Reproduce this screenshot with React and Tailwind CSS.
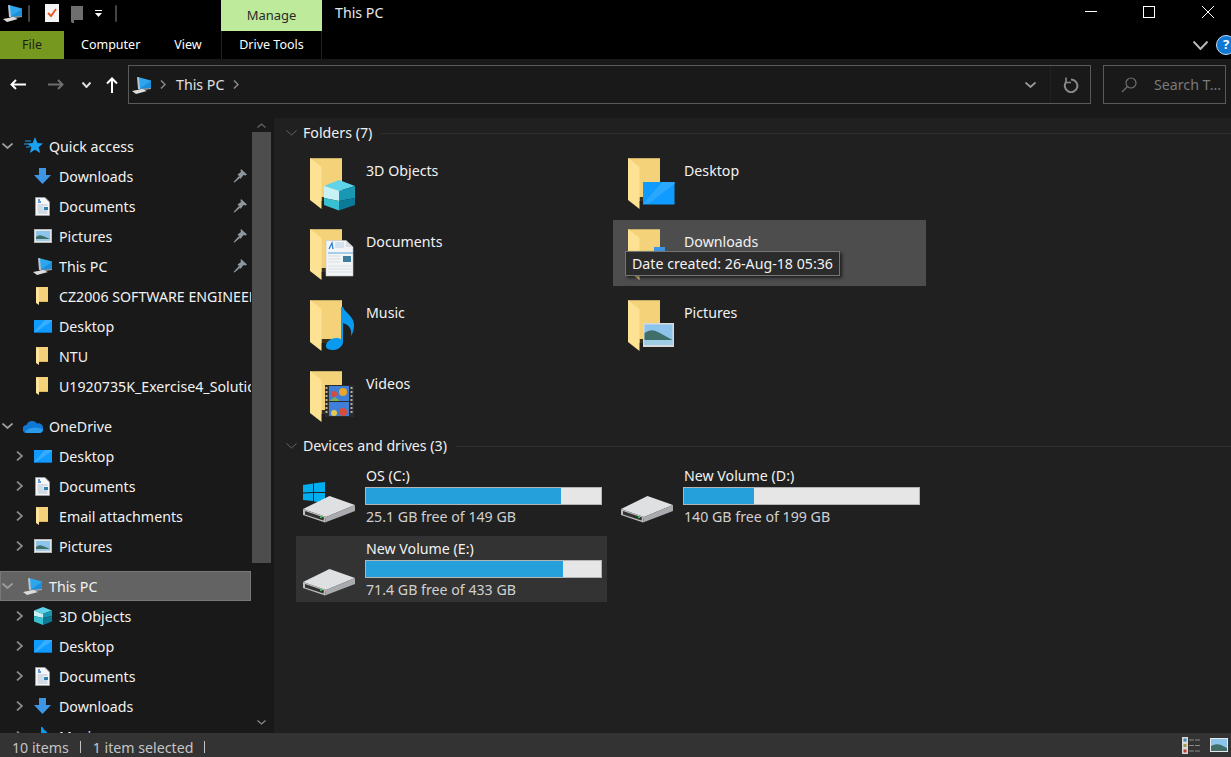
/* small icons, 20x20 box */
const PcIcon = () => (
  <svg width="20" height="18" viewBox="0 0 20 18">
    <polygon points="6,1 19,4.500 19,12 7,13" fill="#2ea6ee" />
    <polygon points="7,13 19,5 19,12" fill="#1b8fdc" />
    <polygon points="5,1 7,1.500 8,13 6,13" fill="#b9c6d0" />
    <polygon points="7,13 19,12 19,13 8,14.500" fill="#a8a8a8" />
    <polygon points="0,15 10,13 15,15 4,18" fill="#dcdcdc" />
  </svg>
);

const StarIcon = () => (
  <svg width="20" height="18" viewBox="0 0 20 18">
    <polygon points="12,0 14.400,6 20,6.400 15.600,10.200 17.200,16 12,12.800 6.800,16 8.400,10.200 4,6.400 9.600,6" fill="#1ba1f2" />
    <path d="M2 4h6M1 7h4M3 10h4" stroke="#1ba1f2" strokeWidth="1" />
  </svg>
);

const DownloadIcon = () => (
  <svg width="18" height="17" viewBox="0 0 18 17">
    <polygon points="5,0 12,0 12,7 17,7 8.500,16 0,7 5,7" fill="#3d95e6" />
  </svg>
);

const DocIcon = () => (
  <svg width="15" height="19" viewBox="0 0 15 19">
    <polygon points="0.500,0.500 10,0.500 14.500,5 14.500,18.500 0.500,18.500" fill="#f7f7f7" stroke="#9a9a9a" />
    <path d="M3 3h2M3 5h3" stroke="#2d7fd0" strokeWidth="1.400" />
    <path d="M2.500 8h10M2.500 10h6M2.500 12h6M2.500 14h10M2.500 16h10" stroke="#9cb3c6" strokeWidth="0.800" />
    <rect x="9" y="10" width="4" height="3" fill="#2d7fb0" />
  </svg>
);

const PicIcon = () => (
  <svg width="18" height="14" viewBox="0 0 18 14">
    <rect x="0.500" y="0.500" width="17" height="13" fill="#e4e6e8" stroke="#b8b8b8" />
    <rect x="2" y="2" width="14" height="10" fill="#8cc4ec" />
    <path d="M2 8 Q5 5 9 7 L16 10 H2Z" fill="#3f6f68" />
    <rect x="2" y="10" width="14" height="2" fill="#9ccde4" />
  </svg>
);

const SmallFolder = () => (
  <svg width="13" height="18" viewBox="0 0 13 18">
    <polygon points="0,0 12,0 12,15 3,15" fill="#f3d27a" />
    <polygon points="0,0 3,2 3,18 0,16" fill="#fde49a" />
    <rect x="3" y="14" width="9" height="1" fill="#e0b95a" />
  </svg>
);

const DesktopIcon = () => (
  <svg width="18" height="13" viewBox="0 0 18 13">
    <rect width="18" height="13" fill="#0f9bff" />
    <polygon points="0,12 11,0 18,0 18,1 2,12" fill="#37adff" />
    <rect y="12" width="18" height="1" fill="#0b6fc0" />
  </svg>
);

const CloudIcon = () => (
  <svg width="20" height="13" viewBox="0 0 20 13">
    <path d="M4 13a4 4 0 0 1-.5-8A6 6 0 0 1 14 3.500 4.800 4.800 0 0 1 20 9a4 4 0 0 1-4 4Z" fill="#0f78d4" />
    <path d="M4 13a4 4 0 0 1-2-1c2-3 8-6 18-3a4 4 0 0 1-4 4Z" fill="#2a9bea" />
  </svg>
);

const SmallCube = () => (
  <svg width="18" height="18" viewBox="0 0 18 18">
    <polygon points="9,0 18,3.500 9,7 0,3.500" fill="#5fd4e8" />
    <polygon points="0,3.500 9,7 9,11 0,9" fill="#c8f1f5" />
    <polygon points="0,9 9,11 9,18 0,14.500" fill="#38c0d0" />
    <polygon points="18,3.500 9,7 9,11 18,9" fill="#1898b4" />
    <polygon points="18,9 9,11 9,18 18,14.500" fill="#0a7a98" />
  </svg>
);

const MusicSmall = () => (
  <svg width="14" height="18" viewBox="0 0 14 18">
    <path d="M5 0h1.500c.5 3 6 4 5 9-1-2-3-3-5-3v8c0 2-2 3.500-4 3.500S0 16 1 14.500 4 13 5 13.500Z" fill="#0a9bf0" />
  </svg>
);

const Pin = () => (
  <svg width="14" height="14" viewBox="0 0 14 14">
    <polygon points="8,0 14,5.500 12.500,6.500 10.500,6 7.500,10 6.500,7.500 4.500,5.500 8,3 7.500,1.500" fill="#8e979e" />
    <polygon points="6,7 7.500,8.500 1.500,13.500 0.500,13" fill="#8e979e" />
  </svg>
);

/* chevrons at the sizes the shell draws them */
const ChevDown = ({ className, w = 11, h = 6, sw = 1.700 }) => (
  <svg width={w} height={h} viewBox={`0 0 ${w} ${h}`} className={className}>
    <path d={`M.5 .5L${w / 2} ${h - 1}L${w - 0.5} .5`} fill="none" stroke="currentColor" strokeWidth={sw} />
  </svg>
);

const ChevRight = ({ className, w = 7, h = 10, sw = 1.700 }) => (
  <svg width={w} height={h} viewBox={`0 0 ${w} ${h}`} className={className}>
    <path d={`M1 .5L${w - 1} ${h / 2}L1 ${h - 0.5}`} fill="none" stroke="currentColor" strokeWidth={sw} />
  </svg>
);

/* large folder, every overlay drawn relative to the folder's top left */
const BigFolder = ({ children }) => (
  <svg width="48" height="54" viewBox="0 0 48 54" className="shrink-0">
    <polygon points="0,0 32,0 32,43 11,43" fill="#f3d27a" />
    <rect y="0" width="32" height="1" fill="#c9ae6a" />
    <rect x="11.500" y="39" width="20.500" height="4" fill="#3b321c" />
    <polygon points="0,0 11.500,9 11.500,51 0,42" fill="#fde293" />
    {children}
  </svg>
);

const CubeOverlay = () => (
  <>
    <polygon points="29,22 45,28 29,33 14,28" fill="#5fd4e8" />
    <polygon points="14,28 29,33 29,43 14,40" fill="#c8f1f5" />
    <polygon points="14,40 29,43 29,52.500 14,47" fill="#38c0d0" />
    <polygon points="45,28 29,33 29,43 45,40" fill="#1898b4" />
    <polygon points="45,40 29,43 29,52.500 45,47" fill="#0a7a98" />
  </>
);

const DocOverlay = () => (
  <>
    <polygon points="16,11.500 36,11.500 43,18 43,47 16,47" fill="#f2f4f6" stroke="#c4c4c4" strokeWidth="0.600" />
    <polygon points="36,11.500 43,18 36,18" fill="#d8dde2" />
    <path d="M19 20l3-6 1 6" stroke="#2d7fd0" strokeWidth="1.300" fill="none" />
    <path d="M25 14h9M25 16h9M25 18h9" stroke="#a8c8e8" strokeWidth="0.800" />
    <path d="M18 24h25" stroke="#5aa6dc" strokeWidth="1" />
    <path d="M18 27h12M18 30h12M18 33h12M18 37h24M18 40h24M18 43h24" stroke="#d2d8de" strokeWidth="0.800" />
    <rect x="33" y="27" width="8" height="6" fill="#3d7f9e" />
  </>
);

const MusicOverlay = () => (
  <path d="M31 7h2c1 5 11 9 11 18 0 4-1 8-3 11 1-6-1-11-8-13v19c0 4-5 8-9 8-5 0-8-1-8-4 0-4 5-8 10-8 2 0 4 .5 5 1Z" fill="#0a9bf0" />
);

const VideoOverlay = () => (
  <>
    <rect x="15" y="14" width="29" height="32" fill="#2c2c2c" />
    <rect x="19" y="15" width="20" height="15" fill="#3f7fd8" />
    <rect x="19" y="31" width="20" height="14" fill="#3f7fd8" />
    <circle cx="33" cy="21" r="4" fill="#e8a52c" />
    <circle cx="24" cy="23" r="3" fill="#d84c3c" />
    <path d="M19 30l6-4 5 4Z" fill="#7fae52" />
    <circle cx="33" cy="41" r="4" fill="#d84c3c" />
    <circle cx="24" cy="42" r="3" fill="#e8c84c" />
    <path d="M16.500 16v28M41.500 16v28" stroke="#b8b09a" strokeWidth="2" strokeDasharray="2 2" />
  </>
);

const DesktopOverlay = () => (
  <>
    <rect x="15" y="24" width="31.500" height="22.500" fill="#0f9bff" />
    <polygon points="15,46 34,24 46.500,24 46.500,26 20,46" fill="#2aa8ff" />
  </>
);

const DownloadOverlay = () => (
  <>
    <rect x="26" y="18" width="11" height="14" fill="#3d95e6" />
    <polygon points="18,30 45,30 31.500,46" fill="#3d95e6" />
  </>
);

const PictureOverlay = () => (
  <>
    <rect x="15" y="23" width="31" height="24" fill="#d8dade" />
    <rect x="16.500" y="24.500" width="28" height="20.500" fill="#8cc4ec" />
    <path d="M16.500 33 Q23 28 30 32 L44.500 40 H16.500Z" fill="#3f6f68" />
    <rect x="16.500" y="40" width="28" height="5" fill="#9ccde4" />
  </>
);

const DriveIcon = ({ windows }) => (
  <svg width="56" height="41" viewBox="0 0 56 41">
    {windows && (
      <g fill="#00adef">
        <polygon points="0,3 10,1.500 10,10 0,10.500" />
        <polygon points="11,1.200 22,0 22,10 11,10" />
        <polygon points="0,11.500 10,11 10,19 0,18" />
        <polygon points="11,11 22,11 22,21 11,19.500" />
      </g>
    )}
    <polygon points="26.500,14 52,23 23,35 0,27" fill="#dfe0e2" />
    <polygon points="0,27 23,35 22,40.500 0,33" fill="#bdbdbd" />
    <polygon points="2,29 21,35.500 20.500,38.500 2,32.500" fill="#333" />
    <polygon points="23,35 52,23 52,29 22,40.500" fill="#a9abae" />
    <rect x="17" y="34" width="2" height="2" fill="#35c04a" />
  </svg>
);

const quickAccess = [
  { label: "Downloads", icon: <DownloadIcon />, pin: true },
  { label: "Documents", icon: <DocIcon />, pin: true },
  { label: "Pictures", icon: <PicIcon />, pin: true },
  { label: "This PC", icon: <PcIcon />, pin: true },
  { label: "CZ2006 SOFTWARE ENGINEERING", icon: <SmallFolder /> },
  { label: "Desktop", icon: <DesktopIcon /> },
  { label: "NTU", icon: <SmallFolder /> },
  { label: "U1920735K_Exercise4_Solutions", icon: <SmallFolder /> },
];

const oneDrive = [
  { label: "Desktop", icon: <DesktopIcon /> },
  { label: "Documents", icon: <DocIcon /> },
  { label: "Email attachments", icon: <SmallFolder /> },
  { label: "Pictures", icon: <PicIcon /> },
];

const thisPc = [
  { label: "3D Objects", icon: <SmallCube /> },
  { label: "Desktop", icon: <DesktopIcon /> },
  { label: "Documents", icon: <DocIcon /> },
  { label: "Downloads", icon: <DownloadIcon /> },
  { label: "Music", icon: <MusicSmall /> },
];

const folders = [
  { name: "3D Objects", overlay: <CubeOverlay /> },
  { name: "Desktop", overlay: <DesktopOverlay /> },
  { name: "Documents", overlay: <DocOverlay /> },
  { name: "Downloads", overlay: <DownloadOverlay />, hovered: true },
  { name: "Music", overlay: <MusicOverlay /> },
  { name: "Pictures", overlay: <PictureOverlay /> },
  { name: "Videos", overlay: <VideoOverlay /> },
];

const drives = [
  { name: "OS (C:)", free: "25.1 GB free of 149 GB", used: 82.800, windows: true },
  { name: "New Volume (D:)", free: "140 GB free of 199 GB", used: 29.800 },
  { name: "New Volume (E:)", free: "71.4 GB free of 433 GB", used: 84, selected: true },
];

/* ── Nav pane rows ── */
const RootRow = ({ icon, label, selected }) => (
  <div className={`flex h-[30px] items-center border ${selected ? "border-[#777] bg-[#636363]" : "border-transparent"}`}>
    <ChevDown className="ml-px shrink-0 text-[#a0a0a0]" />
    <span className="flex w-[36px] shrink-0 justify-center pl-1">{icon}</span>
    <span className="whitespace-nowrap pt-[2px] text-[#f2f2f2]">{label}</span>
  </div>
);

const ChildRow = ({ icon, label, pin, arrow }) => (
  <div className="flex h-[30px] items-center">
    <span className="flex w-[26px] shrink-0 justify-end pr-[3px]">
      {arrow && <ChevRight className="text-[#8a8a8a]" />}
    </span>
    <span className="flex w-[33px] shrink-0 justify-center">{icon}</span>
    <span className="min-w-0 flex-1 overflow-hidden whitespace-nowrap pt-[2px] text-[#f2f2f2]">{label}</span>
    {pin && <span className="mr-[4px] shrink-0"><Pin /></span>}
  </div>
);

const NavPane = () => (
  <aside className="flex w-[274px] shrink-0 overflow-hidden bg-[#191919]">
    <nav className="w-[251px] shrink-0 overflow-hidden pt-[13px]">
      <RootRow icon={<StarIcon />} label="Quick access" />
      {quickAccess.map((item) => (
        <ChildRow key={item.label} {...item} />
      ))}
      <div className="mt-[10px]">
        <RootRow icon={<CloudIcon />} label="OneDrive" />
      </div>
      {oneDrive.map((item) => (
        <ChildRow key={item.label} {...item} arrow />
      ))}
      <div className="mt-[10px]">
        <RootRow icon={<PcIcon />} label="This PC" selected />
      </div>
      {thisPc.map((item) => (
        <ChildRow key={item.label} {...item} arrow />
      ))}
    </nav>
    {/* scrollbar */}
    <div className="ml-px flex w-[19px] flex-col items-center">
      <div className="flex h-[14px] items-center">
        <ChevDown w={9} h={5} sw={1.200} className="rotate-180 text-[#666]" />
      </div>
      <div className="h-[431px] w-full bg-[#4d4d4d]" />
      <div className="mt-[152px] flex h-[14px] items-center">
        <ChevDown w={9} h={5} sw={1.200} className="text-[#8a8a8a]" />
      </div>
    </div>
  </aside>
);

/* ── Content pane ── */
const GroupHeader = ({ label }) => (
  <div className="flex h-[30px] items-center pl-[12px]">
    <ChevDown sw={1} className="shrink-0 text-[#666]" />
    <span className="ml-[6px] whitespace-nowrap text-[#f0f0f0]">{label}</span>
    <span className="ml-[9px] h-px flex-1 bg-[#2e2e2e]" />
  </div>
);

const FolderTile = ({ name, overlay, hovered }) => (
  <div className={`flex h-[66px] pt-[9px] ${hovered ? "relative ml-[-1px] w-[313px] bg-[#4d4d4d] pl-[15px]" : "w-[311px] pl-[14px]"}`}>
    <BigFolder>{overlay}</BigFolder>
    <span className="ml-[8px] mt-[3px] leading-5 text-[#f2f2f2]">{name}</span>
    {hovered && (
      <div className="absolute left-[12px] top-[31px] flex h-[25px] items-center whitespace-nowrap border border-[#767676] bg-[#2b2b2b] px-[6px] text-[#f2f2f2] shadow-[2px_2px_3px_rgba(0,0,0,0.6)]">
        Date created: 26-Aug-18 05:36
      </div>
    )}
  </div>
);

const DriveTile = ({ name, free, used, windows, selected }) => (
  <div className={`flex h-[66px] w-[311px] pl-[7px] ${selected ? "bg-[#333]" : ""}`}>
    <div className="w-[62px] shrink-0 pt-[19px]">
      <DriveIcon windows={windows} />
    </div>
    <div className="w-[237px] pt-[3px] leading-5">
      <div className="pl-px text-[#f2f2f2]">{name}</div>
      <div className="mt-px h-[18px] border border-[#b4b4b4] bg-[#e6e6e6]">
        <div className="h-full bg-[#26a0da]" style={{ width: `${used}%` }} />
      </div>
      <div className="mt-[2px] pl-px text-[#d0d0d0]">{free}</div>
    </div>
  </div>
);

const ContentPane = () => (
  <main className="min-w-0 flex-1 bg-[#202020]">
    <GroupHeader label="Folders (7)" />
    <div className="ml-[22px] mt-px grid grid-cols-[318px_318px] gap-y-[5px]">
      {folders.map((folder) => (
        <FolderTile key={folder.name} {...folder} />
      ))}
    </div>
    <div className="mt-[3px]">
      <GroupHeader label="Devices and drives (3)" />
    </div>
    <div className="ml-[22px] mt-[2px] grid grid-cols-[318px_318px] gap-y-[7px]">
      {drives.map((drive) => (
        <DriveTile key={drive.name} {...drive} />
      ))}
    </div>
  </main>
);

/* ── Title bar and ribbon tabs ── */
const TitleBar = () => (
  <header className="bg-black text-white">
    <div className="flex h-[31px]">
      <div className="flex w-[221px] items-start pt-[4px]">
        <span className="ml-[3px]"><PcIcon /></span>
        <span className="ml-[5px] mt-px h-[17px] w-[2px] rounded-sm bg-[#444]" />
        <svg width="14" height="18" viewBox="0 0 14 18" className="ml-[15px]">
          <rect width="14" height="18" fill="#f4f4f4" />
          <path d="M3 9l3 3 5-7" stroke="#e8541c" strokeWidth="1.800" fill="none" />
        </svg>
        <svg width="12" height="18" viewBox="0 0 12 18" className="ml-[12px] mt-px">
          <polygon points="0,1 12,1 12,15 3,15 3,19 0,17" fill="#6e6e6e" />
        </svg>
        <svg width="8" height="8" viewBox="0 0 8 8" className="ml-[12px] mt-[6px]">
          <path d="M0 .5h7" stroke="#fff" />
          <polygon points="0,3 7,3 3.500,7" fill="#fff" />
        </svg>
        <span className="ml-[12px] mt-px h-[17px] w-[2px] rounded-sm bg-[#444]" />
      </div>
      <div className="flex w-[101px] items-center justify-center bg-[#bdea9b] text-[13px] text-[#2a2a2a]">Manage</div>
      <div className="ml-[13px] mt-[2px] text-[#e8e8e8]">This PC</div>
      <div className="ml-auto flex gap-[46px] pr-[17px] pt-[6px]">
        <svg width="12" height="12" viewBox="0 0 12 12"><path d="M0 5.500h12" stroke="#fff" /></svg>
        <svg width="12" height="12" viewBox="0 0 12 12"><rect x="0.500" y="0.500" width="11" height="11" stroke="#fff" fill="none" /></svg>
        <svg width="12" height="12" viewBox="0 0 12 12" className="ml-px"><path d="M0 0l12 12M12 0L0 12" stroke="#fff" /></svg>
      </div>
    </div>
    <div className="flex h-[28px] items-center text-[12.500px]">
      <div className="flex h-full w-[221px] items-center">
        <div className="flex h-full w-[64px] items-center justify-center bg-[#76981e] text-[#1c1c1c]">File</div>
        <span className="ml-[17px]">Computer</span>
        <span className="ml-[34px]">View</span>
      </div>
      <div className="flex h-full w-[101px] items-center justify-center border-x border-[#222]">Drive Tools</div>
      <ChevDown w={15} h={9} sw={2} className="ml-auto mr-[8px] text-[#b8b8b8]" />
      <div className="mr-[-5px] flex h-[20px] w-[20px] shrink-0 items-center justify-center rounded-full border border-[#bcdcf5] bg-[#0f78d4] text-[13px] font-bold">?</div>
    </div>
  </header>
);

const AddressBar = () => (
  <div className="flex h-[59px] bg-[#191919] pt-[6px] text-[#e0e0e0]">
    <div className="flex h-[39px] w-[128px] shrink-0 items-center">
      <svg width="16" height="11" viewBox="0 0 16 11" className="ml-[10px]">
        <path d="M1.500 5.500H16M6 1L1.500 5.500L6 10" fill="none" stroke="#fff" strokeWidth="2" />
      </svg>
      <svg width="16" height="11" viewBox="0 0 16 11" className="ml-[22px]">
        <path d="M0 5.500H14.500M10 1L14.500 5.500L10 10" fill="none" stroke="#6e6e6e" strokeWidth="2" />
      </svg>
      <ChevDown w={9} h={6} sw={2} className="ml-[18px] text-[#ddd]" />
      <svg width="12" height="16" viewBox="0 0 12 16" className="ml-[15px]">
        <path d="M6 1.500V16M1 6.500L6 1.500L11 6.500" fill="none" stroke="#fff" strokeWidth="2" />
      </svg>
    </div>
    <div className="flex h-[39px] flex-1 items-center border border-[#5a5a5a]">
      <span className="ml-[3px]"><PcIcon /></span>
      <ChevRight w={6} h={9} sw={1.500} className="ml-[8px] text-[#8a8a8a]" />
      <span className="ml-[10px]">This PC</span>
      <ChevRight w={6} h={9} sw={1.500} className="ml-[9px] text-[#8a8a8a]" />
      <ChevDown w={11} h={6} sw={1.800} className="ml-auto mr-[14px] text-[#9a9a9a]" />
      <span className="h-full w-px bg-[#222]" />
      <svg width="16" height="16" viewBox="0 0 16 16" className="ml-[12px] mr-[11px]">
        <path d="M8 2.500A6.300 6.300 0 1 1 3.300 4.700" fill="none" stroke="#8a8a8a" strokeWidth="2" />
        <path d="M3 .5V5.500H8" fill="none" stroke="#8a8a8a" strokeWidth="1.600" />
      </svg>
    </div>
    <div className="ml-[12px] mr-[5px] flex h-[39px] w-[123px] shrink-0 items-center overflow-hidden whitespace-nowrap border border-[#5a5a5a] pl-[17px] text-[#7a7a7a]">
      <svg width="16" height="16" viewBox="0 0 16 16" className="shrink-0">
        <circle cx="10" cy="6" r="5" fill="none" stroke="#6e6e6e" strokeWidth="1.200" />
        <path d="M6.500 9.500L1 15" stroke="#6e6e6e" strokeWidth="1.200" />
      </svg>
      <span className="ml-[17px]">Search T...</span>
    </div>
  </div>
);

const StatusBar = () => (
  <footer className="flex h-[24px] shrink-0 items-center bg-[#333] text-[#c4c4c4]">
    <span className="ml-[12px] pt-[5px]">10 items</span>
    <span className="ml-[11px] mt-[3px] h-[12px] w-px bg-[#c4c4c4]" />
    <span className="ml-[12px] pt-[5px]">1 item selected</span>
    <span className="ml-[11px] mt-[3px] h-[12px] w-px bg-[#c4c4c4]" />
    <svg width="18" height="17" viewBox="0 0 18 17" className="ml-auto">
      <rect width="6" height="17" fill="#d8d8d8" />
      <rect x="1.500" y="1.500" width="3" height="3" fill="#3f86b0" />
      <rect x="1.500" y="7" width="3" height="3" fill="#a89a4c" />
      <rect x="1.500" y="12.500" width="3" height="3" fill="#c0392b" />
      <path d="M7 3h5M13 3h5M7 8.500h5M13 8.500h5M7 14h5M13 14h5" stroke="#8a8a8a" />
    </svg>
    <svg width="18" height="14" viewBox="0 0 18 14" className="ml-[10px] mr-[3px]">
      <rect x="0.500" y="0.500" width="17" height="13" fill="#8cc4ec" stroke="#e8e8e8" />
      <path d="M1 8 Q6 5 11 7 L17 10 V13 H1Z" fill="#3f6f68" />
    </svg>
  </footer>
);

export default function App() {
  return (
    <div className="flex h-screen w-screen flex-col overflow-hidden bg-[#202020] font-['Noto_Sans',sans-serif] text-[14.200px]">
      <TitleBar />
      <AddressBar />
      <div className="flex min-h-0 flex-1">
        <NavPane />
        <ContentPane />
      </div>
      <StatusBar />
    </div>
  );
}
